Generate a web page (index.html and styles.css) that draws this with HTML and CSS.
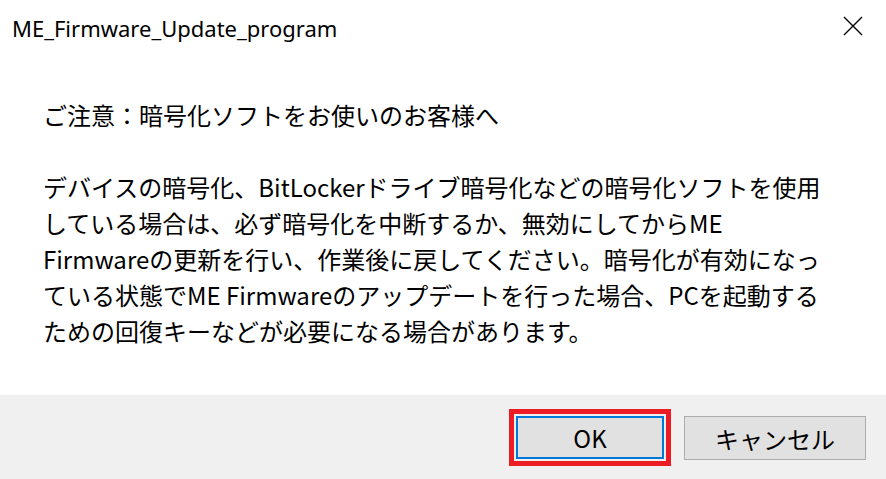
FILE: index.html
```html
<!DOCTYPE html>
<html>
<head>
  <title>ME_Firmware_Update_program</title>
  <link rel="stylesheet" href="styles.css">
</head>
<body>
  <div class="dialog">
    <div class="titlebar">
      <span class="title">ME_Firmware_Update_program</span>
      <span class="close">
        <svg width="20" height="20" viewBox="0 0 20 20"><path d="M1 1 L19 19 M19 1 L1 19" stroke="#000" stroke-width="1.4" fill="none"/></svg>
      </span>
    </div>

    <div class="message">
      <p>ご注意：暗号化ソフトをお使いのお客様へ</p>
      <p>デバイスの暗号化、BitLockerドライブ暗号化などの暗号化ソフトを使用<br>している場合は、必ず暗号化を中断するか、無効にしてからME<br>Firmwareの更新を行い、作業後に戻してください。暗号化が有効になっ<br>ている状態でME Firmwareのアップデートを行った場合、PCを起動する<br>ための回復キーなどが必要になる場合があります。</p>
    </div>

    <div class="footer">
      <button class="btn btn-ok">OK</button>
      <button class="btn btn-cancel">キャンセル</button>
    </div>
  </div>
</body>
</html>
```

FILE: styles.css
```css
body {
  margin: 0;
  background: #fff;
  font-family: "Noto Sans CJK JP", sans-serif;
  color: #000;
}
.dialog {
  width: 886px;
  height: 479px;
  display: flex;
  flex-direction: column;
}
.titlebar {
  height: 52px;
  display: flex;
  align-items: center;
  justify-content: space-between;
  padding: 0 23px 0 12px;
}
.title {
  font-family: "Noto Sans", sans-serif;
  font-size: 22px;
  margin-top: 4px;
}
.close {
  display: flex;
}
.message {
  flex: 1;
  padding: 45px 0 0 43px;
  font-size: 24px;
  line-height: 36px;
}
.message p {
  margin: 0 0 36px;
}
.footer {
  height: 84px;
  background: #f0f0f0;
  display: flex;
  align-items: flex-start;
  justify-content: flex-end;
  padding: 21px 20px 0 0;
  box-sizing: border-box;
  gap: 20px;
}
.btn {
  height: 44px;
  font-family: "Noto Sans CJK JP", sans-serif;
  font-size: 24px;
  background: #e1e1e1;
  color: #000;
  padding: 0;
  box-sizing: border-box;
}
.btn-ok {
  width: 148px;
  height: 43px;
  border: 2px solid #0078d7;
  outline: 5px solid #ed1c24;
  outline-offset: 2px;
}
.btn-cancel {
  width: 182px;
  border: 1px solid #adadad;
}
```
